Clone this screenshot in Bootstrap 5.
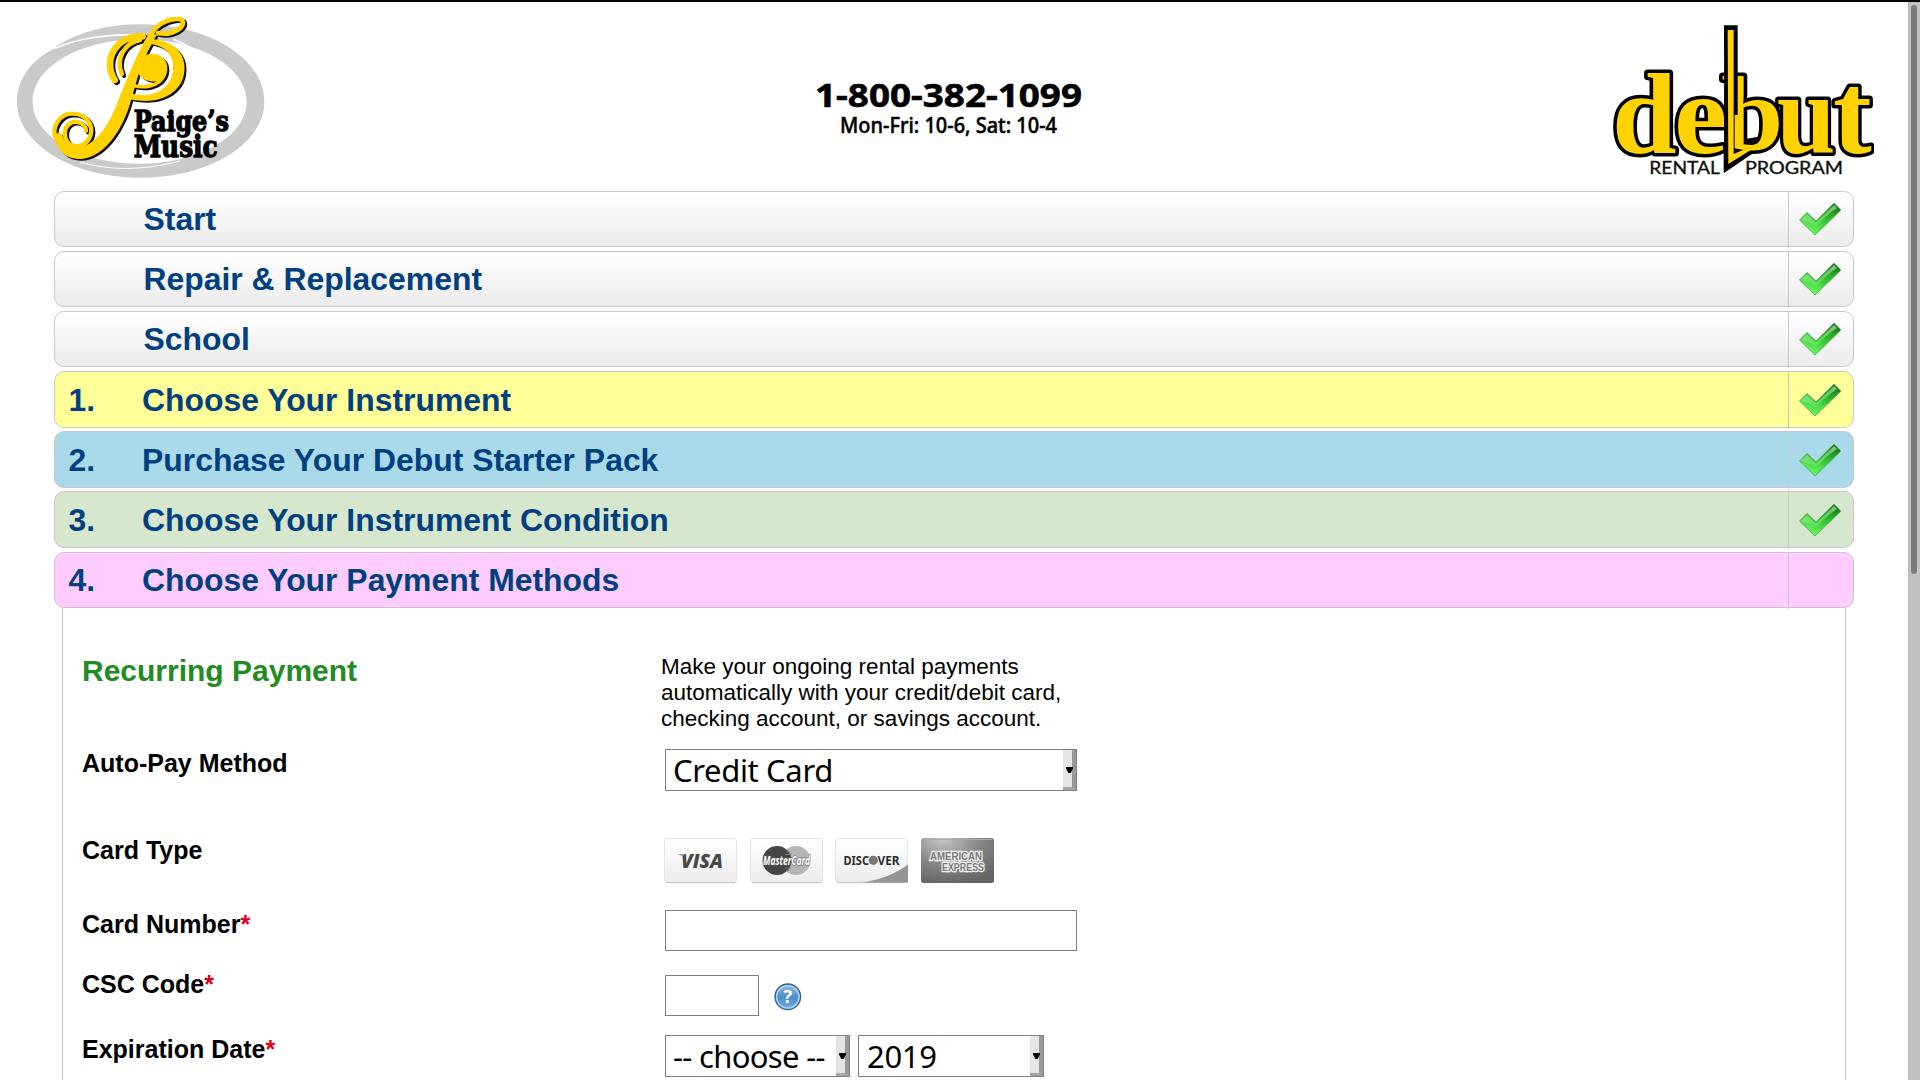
<!DOCTYPE html>
<html lang="en">
<head>
<meta charset="utf-8">
<title>Paige's Music - Debut Rental Program</title>
<link href="https://cdn.jsdelivr.net/npm/bootstrap@5.3.0/dist/css/bootstrap.min.css" rel="stylesheet">
<style>
  body { font-family: "Liberation Sans", Arial, sans-serif; color: #000; background: #fff; }
  .screen { height: 1080px; border-top: 2px solid #000; }
  .scroll-track { width: 12px; background: #c1c3c2; border-left: 1px solid #b4b6b5; padding: 3px 3px 0 2px; }
  .scroll-thumb { width: 6px; height: 569px; background: #797c7c; border-radius: 3px; }
  .masthead { height: 189px; padding: 15px 34px 0 17px; }
  .masthead svg { display: block; flex: none; }
  .phone { margin: 60px 0 0 533px; }
  .steps { margin-left: 54px; width: 1800px; }
  .step { height: 56px; margin-bottom: 4px; border: 1px solid #c8c8c8; border-radius: 10px; color: #004080; font-size: 31.9px; font-weight: bold; line-height: 54px; background: linear-gradient(#fff, #ebebeb); }
  .step-tall { height: 57px; margin-bottom: 3px; line-height: 56px; }
  .step-no { width: 73px; padding-left: 13.5px; flex: none; }
  .step-name { padding-left: 14px; }
  .plain .step-name { padding-left: 15.5px; }
  .step-state { width: 65px; height: 56px; border-left: 1px solid #c8c8c8; flex: none; }
  .step-tall .step-state { height: 57px; }
  .step-state svg { display: block; margin: 8px 0 0 8px; }
  .plain .step-state svg { margin-top: 7px; }
  .s-yellow { background: #ffff99; }
  .s-blue { background: #aadaea; }
  .s-green { background: #d6e7cd; margin-bottom: 4px; }
  .s-pink { background: #ffccff; margin-bottom: 0; }
  .pay-panel { margin: 0 8px; height: 480px; padding: 45px 0 0 19px; border: solid #c8c8c8; border-width: 0 1px; }
  .field-row > :first-child { width: 579px; flex: none; }
  .field-label { font-size: 25px; font-weight: bold; line-height: 28px; }
  .field-label.drop { padding-top: 1px; }
  .req { color: #d90014; }
  .pay-title { color: #228b22; font-size: 30px; font-weight: bold; line-height: 34px; margin: 0; padding-top: 1px; }
  .pay-note { font-size: 22.5px; line-height: 26px; margin: 0; padding-top: 1px; white-space: nowrap; }
  .h-96 { height: 96px; } .h-86 { height: 86px; } .h-74 { height: 74px; } .h-60 { height: 60px; } .h-66 { height: 66px; }
  .box { border: 1px solid #7f7f7f; height: 42px; margin-left: 4px; background: #fff; }
  .box-wide { width: 412px; } .box-csc { width: 94px; } .box-month { width: 185px; } .box-year { width: 186px; margin-left: 8px; }
  .box-text { height: 41px; padding: 0; outline: 0; }
  .pick { font-family: "Noto Sans", sans-serif; font-size: 31px; line-height: 40px; padding-left: 7px; white-space: nowrap; letter-spacing: -.35px; }
  .box-month .pick { letter-spacing: -.68px; }
  .box-year .pick { padding-left: 8px; }
  .pick-arrow { width: 13px; height: 40px; background: #e5e5e4; border: solid; border-width: 0 4px 3px 0; border-color: #999; border-bottom-color: #a6a6a6; flex: none; display: flex; align-items: center; justify-content: flex-end; }
  .pick-arrow svg { display: block; margin: 3px -1px 0 0; overflow: visible; flex: none; }
  .cards { margin: 2px 0 0 3px; }
  .cards svg { display: block; }
</style>
</head>
<body class="overflow-hidden">
<svg width="0" height="0" class="position-absolute">
  <defs>
    <linearGradient id="tickFill" x1="0.85" y1="0.05" x2="0.35" y2="0.95">
      <stop offset="0" stop-color="#137a13"/><stop offset=".45" stop-color="#2fbd2c"/><stop offset="1" stop-color="#66f75f"/>
    </linearGradient>
    <linearGradient id="tickShine" x1="0" y1="0" x2="0" y2="1">
      <stop offset="0" stop-color="#fff" stop-opacity=".5"/><stop offset="1" stop-color="#fff" stop-opacity=".12"/>
    </linearGradient>
    <linearGradient id="cardFill" x1="0" y1="0" x2="0" y2="1"><stop offset="0" stop-color="#fff"/><stop offset="1" stop-color="#ececec"/></linearGradient>
    <radialGradient id="amexFill" cx=".3" cy=".05" r="1"><stop offset="0" stop-color="#c4c4c4"/><stop offset=".5" stop-color="#868686"/><stop offset="1" stop-color="#646464"/></radialGradient>
    <linearGradient id="helpFill" x1="0" y1="0" x2="0" y2="1"><stop offset="0" stop-color="#9cc2e2"/><stop offset=".5" stop-color="#4b8cc6"/><stop offset="1" stop-color="#6fb1e2"/></linearGradient>
    <symbol id="tick" viewBox="0 0 46 38">
      <path d="M2.5 21 L10 13.5 L19 22 L37 4 L44 11 L18 36 Z" fill="url(#tickFill)" stroke="#5fae5f" stroke-width="1" stroke-linejoin="round"/>
      <path d="M4 21 L10 15 L19 24 L37 6 L40 9 C32 14 26 20 19 27 C14 24 9 22 4 21Z" fill="url(#tickShine)"/>
    </symbol>
    <symbol id="caret" viewBox="0 0 7 7"><path d="M0 0H7V1.5L4.6 6H2.4L0 1.5Z" fill="#000"/></symbol>
  </defs>
</svg>

<div class="screen d-flex">
  <main class="flex-grow-1 overflow-hidden">
    <header class="masthead d-flex">
      <svg width="250" height="164" viewBox="51 51 750 492" role="img" aria-label="Paige's Music">
        <path fill="#cacaca" fill-rule="evenodd" d="M168 139 C240 95 325 73 422 73 C630 73 793 178 793 305 C793 430 630 533 422 533 C215 533 51 430 51 305 C51 240 93 178 165 145 Z M419 118 C242 118 98 200 98 305 C98 408 242 491 419 491 C596 491 740 408 740 305 C740 200 596 118 419 118 Z"/>
        <path d="M165 145 C240 112 320 105 410 104 M520 118 C550 130 575 143 602 164" fill="none" stroke="#fff" stroke-width="5"/>
        <path d="M240 486 C330 512 430 512 540 483" fill="none" stroke="#fff" stroke-width="3"/>
        <defs>
          <g id="clef">
            <path d="M448 98 C410 160 375 250 345 325 C315 398 275 440 232 443 C205 442 190 425 186 400 L164 400 C164 440 190 477 238 477 C305 477 362 400 388 318 L412 235 C424 190 445 150 470 104 Z"/>
            <path d="M458 118 C530 124 562 170 552 222 C541 283 475 316 390 298 L396 281 C450 296 514 272 519 210 C522 165 498 140 452 132 Z"/>
            <path d="M438 165 C470 153 504 172 502 208 C500 250 455 276 400 262 L403 252 C424 257 450 256 470 244 C450 246 425 240 410 215 Z"/>
            <g fill="none" stroke-linecap="round">
              <path d="M170 420 C148 378 186 338 218 341 C258 341 280 374 272 404 C264 434 236 444 215 436 C190 424 188 384 210 370 C234 356 258 376 258 392" stroke-width="13"/>
              <path d="M344 240 C310 188 338 108 428 109" stroke-width="20"/>
              <path d="M366 222 C346 176 374 128 420 120" stroke-width="13"/>
              <path d="M450 112 C468 62 530 50 546 60 C560 82 515 108 474 99" stroke-width="14"/>
            </g>
          </g>
        </defs>
        <use href="#clef" x="6" y="5" fill="#111" stroke="#111" stroke-width="0"/>
        <use href="#clef" fill="#ffd200" stroke="#ffd200" stroke-width="0"/>
        <g font-family="'DejaVu Serif', serif" font-weight="bold" fill="#000" stroke="#000" stroke-width="4">
          <text x="401" y="392" font-size="86" textLength="286" lengthAdjust="spacingAndGlyphs">Paige’s</text>
          <text x="401" y="471" font-size="90" textLength="252" lengthAdjust="spacingAndGlyphs">Music</text>
        </g>
      </svg>
      <svg class="phone" width="290" height="80" viewBox="800 77 290 80">
        <g font-family="'Noto Sans', sans-serif" fill="#000">
          <text x="815" y="107" font-size="33" font-weight="bold" stroke="#000" stroke-width=".6" textLength="267" lengthAdjust="spacingAndGlyphs">1-800-382-1099</text>
          <text x="840" y="133" font-size="22" font-weight="500" stroke="#000" stroke-width=".5" textLength="217" lengthAdjust="spacingAndGlyphs">Mon-Fri: 10-6, Sat: 10-4</text>
        </g>
      </svg>
      <svg class="ms-auto" width="264" height="160" viewBox="66 51 792 480" role="img" aria-label="debut rental program">
        <path d="M409 430V516L580 400Z" fill="#000" stroke="#000" stroke-width="4" stroke-linejoin="round"/>
        <g font-family="'Liberation Serif', serif" font-weight="bold" font-size="340" stroke-linejoin="round" fill="#ffd200" stroke="#000" stroke-width="21" paint-order="stroke">
          <text x="72" y="459" textLength="194" lengthAdjust="spacingAndGlyphs">d</text>
          <text x="258" y="459" textLength="160" lengthAdjust="spacingAndGlyphs">e</text>
          <text x="400" y="450" font-size="320" textLength="186" lengthAdjust="spacingAndGlyphs">b</text>
          <text x="566" y="459" textLength="176" lengthAdjust="spacingAndGlyphs">u</text>
          <text x="735" y="459" font-size="350" textLength="116" lengthAdjust="spacingAndGlyphs">t</text>
        </g>
        <path d="M408 76H449V345H440V462L409 516Z" fill="#000"/>
        <path d="M419 90H437V462L545 415L421 492Z" fill="#ffd200"/>
        <g font-family="Lato, sans-serif" font-size="49" fill="#111" stroke="#111" stroke-width="1">
          <text x="184" y="521" textLength="212" lengthAdjust="spacingAndGlyphs">RENTAL</text>
          <text x="471" y="521" textLength="294" lengthAdjust="spacingAndGlyphs">PROGRAM</text>
        </g>
      </svg>
    </header>

    <section class="steps">
      <div class="step plain d-flex"><div class="step-no"></div><div class="step-name flex-grow-1">Start</div><div class="step-state"><svg width="46" height="38"><use href="#tick"/></svg></div></div>
      <div class="step plain d-flex"><div class="step-no"></div><div class="step-name flex-grow-1">Repair &amp; Replacement</div><div class="step-state"><svg width="46" height="38"><use href="#tick"/></svg></div></div>
      <div class="step plain d-flex"><div class="step-no"></div><div class="step-name flex-grow-1">School</div><div class="step-state"><svg width="46" height="38"><use href="#tick"/></svg></div></div>
      <div class="step step-tall s-yellow d-flex"><div class="step-no">1.</div><div class="step-name flex-grow-1">Choose Your Instrument</div><div class="step-state"><svg width="46" height="38"><use href="#tick"/></svg></div></div>
      <div class="step step-tall s-blue d-flex"><div class="step-no">2.</div><div class="step-name flex-grow-1">Purchase Your Debut Starter Pack</div><div class="step-state"><svg width="46" height="38"><use href="#tick"/></svg></div></div>
      <div class="step step-tall s-green d-flex"><div class="step-no">3.</div><div class="step-name flex-grow-1">Choose Your Instrument Condition</div><div class="step-state"><svg width="46" height="38"><use href="#tick"/></svg></div></div>
      <div class="step s-pink d-flex"><div class="step-no">4.</div><div class="step-name flex-grow-1">Choose Your Payment Methods</div><div class="step-state"></div></div>

      <form class="pay-panel">
        <div class="field-row d-flex align-items-start h-96">
          <h2 class="pay-title">Recurring Payment</h2>
          <p class="pay-note">Make your ongoing rental payments<br>automatically with your credit/debit card,<br>checking account, or savings account.</p>
        </div>
        <div class="field-row d-flex align-items-start h-86">
          <div class="field-label">Auto-Pay Method</div>
          <div class="box box-wide d-flex justify-content-between"><span class="pick">Credit Card</span><span class="pick-arrow"><svg width="7" height="7"><use href="#caret"/></svg></span></div>
        </div>
        <div class="field-row d-flex align-items-start h-74">
          <div class="field-label drop">Card Type</div>
          <div class="cards d-flex">
            <svg width="86" height="48" viewBox="0 0 86 48">
              <rect x=".5" y="1.5" width="72" height="44" rx="2.5" fill="url(#cardFill)" stroke="#e4e4e4"/><path d="M2 45.7H71" stroke="#c2c2c2"/>
              <text x="17" y="31" font-family="'Open Sans', sans-serif" font-style="italic" font-weight="800" font-size="19.5" fill="#484848" textLength="42" lengthAdjust="spacingAndGlyphs">VISA</text>
              <path d="M14 17H21L20 18.5 L18 19Z" fill="#999"/>
            </svg>
            <svg width="85" height="48" viewBox="0 0 85 48">
              <rect x=".5" y="1.5" width="72" height="44" rx="2.5" fill="url(#cardFill)" stroke="#e4e4e4"/><path d="M2 45.7H71" stroke="#c2c2c2"/>
              <circle cx="46" cy="23.5" r="14.5" fill="#b5b5b5"/><circle cx="27" cy="23.5" r="14.5" fill="#454545"/>
              <path d="M36 15H40M35 17.5H41M35 31H41M36 33.5H39" stroke="#777" stroke-width="1"/>
              <text x="13" y="28" font-family="'Open Sans', sans-serif" font-style="italic" font-weight="bold" font-size="11.5" fill="#fff" stroke="#555" stroke-width="1" paint-order="stroke" textLength="47" lengthAdjust="spacingAndGlyphs">MasterCard</text>
            </svg>
            <svg width="86" height="48" viewBox="0 0 86 48">
              <rect x=".5" y="1.5" width="72" height="44" rx="2.5" fill="url(#cardFill)" stroke="#e4e4e4"/><path d="M2 45.7H71" stroke="#c2c2c2"/>
              <path d="M26 45.5C45 43 60 37 73 27.5V45.5Z" fill="#949494"/>
              <g font-family="'Noto Sans', sans-serif" font-weight="bold" font-size="13" fill="#2d2d2d">
                <text x="8.5" y="28" textLength="25.5" lengthAdjust="spacingAndGlyphs">DISC</text><text x="42.5" y="28" textLength="22" lengthAdjust="spacingAndGlyphs">VER</text></g>
              <circle cx="38.3" cy="23.3" r="4.6" fill="#777"/>
            </svg>
            <svg width="74" height="48" viewBox="0 0 74 48">
              <rect x="0" y="1" width="73" height="45" rx="2.5" fill="url(#amexFill)"/><path d="M2 2.5H71" stroke="#aaa"/>
              <g font-family="'Liberation Sans', sans-serif" font-weight="bold" font-size="10.5" fill="#777" stroke="#f2f2f2" stroke-width="2.6" paint-order="stroke">
                <text x="9" y="23" textLength="52" lengthAdjust="spacingAndGlyphs">AMERICAN</text><text x="21" y="34" textLength="42" lengthAdjust="spacingAndGlyphs">EXPRESS</text></g>
            </svg>
          </div>
        </div>
        <div class="field-row d-flex align-items-start h-60">
          <div class="field-label drop">Card Number<span class="req">*</span></div>
          <input class="box box-text box-wide" style="margin-top:1px" type="text" aria-label="Card Number">
        </div>
        <div class="field-row d-flex align-items-start h-66">
          <div class="field-label drop">CSC Code<span class="req">*</span></div>
          <div class="d-flex align-items-center" style="margin-top:6px">
            <input class="box box-text box-csc" type="text" aria-label="CSC Code">
            <svg width="28" height="28" viewBox="0 0 28 28" style="margin:2px 0 0 15px">
              <circle cx="13.8" cy="13.8" r="12.8" fill="url(#helpFill)" stroke="#2a6298" stroke-width="1.3"/>
              <circle cx="13.8" cy="13.8" r="11.2" fill="none" stroke="#b5d3ec" stroke-width="1.4"/>
              <text x="13.8" y="20.3" text-anchor="middle" font-family="'Noto Sans', sans-serif" font-weight="bold" font-size="18" fill="#fff">?</text>
            </svg>
          </div>
        </div>
        <div class="field-row d-flex align-items-start">
          <div class="field-label">Expiration Date<span class="req">*</span></div>
          <div class="box box-month d-flex justify-content-between"><span class="pick">-- choose --</span><span class="pick-arrow"><svg width="7" height="7"><use href="#caret"/></svg></span></div>
          <div class="box box-year d-flex justify-content-between"><span class="pick">2019</span><span class="pick-arrow"><svg width="7" height="7"><use href="#caret"/></svg></span></div>
        </div>
      </form>
    </section>
  </main>
  <div class="scroll-track flex-shrink-0"><div class="scroll-thumb"></div></div>
</div>
<script src="https://cdn.jsdelivr.net/npm/bootstrap@5.3.0/dist/js/bootstrap.bundle.min.js"></script>
</body>
</html>
